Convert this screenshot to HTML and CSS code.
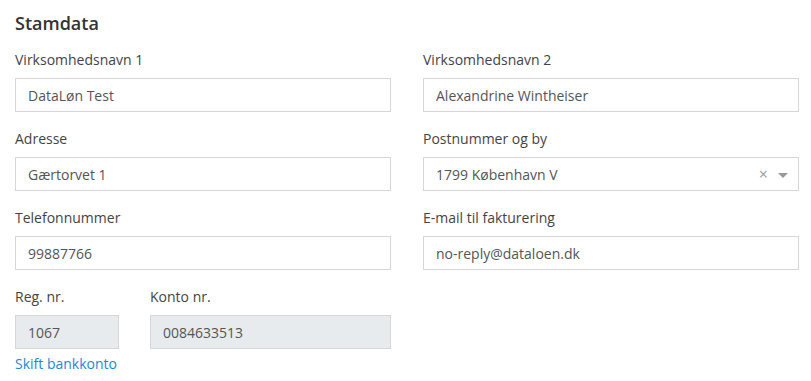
FILE: index.html
```html
<!DOCTYPE html>
<html lang="da">
<head>
    <meta charset="UTF-8">
    <meta name="viewport" content="width=device-width, initial-scale=1.0">
    <title>Stamdata</title>
    <link rel="stylesheet" href="styles.css">
</head>
<body>
    <div class="container">
        <h2>Stamdata</h2>
        <form class="form-grid">
            <div class="field">
                <label for="name1">Virksomhedsnavn 1</label>
                <input type="text" id="name1" value="DataLøn Test">
            </div>
            <div class="field">
                <label for="name2">Virksomhedsnavn 2</label>
                <input type="text" id="name2" value="Alexandrine Wintheiser">
            </div>
            <div class="field">
                <label for="address">Adresse</label>
                <input type="text" id="address" value="Gærtorvet 1">
            </div>
            <div class="field">
                <label>Postnummer og by</label>
                <div class="select-box">
                    <span class="select-value">1799 København V</span>
                    <span class="select-clear">&times;</span>
                    <span class="select-arrow"></span>
                </div>
            </div>
            <div class="field">
                <label for="phone">Telefonnummer</label>
                <input type="text" id="phone" value="99887766">
            </div>
            <div class="field">
                <label for="email">E-mail til fakturering</label>
                <input type="text" id="email" value="no-reply@dataloen.dk">
            </div>
            <div class="field bank">
                <div class="bank-row">
                    <div class="reg">
                        <label for="reg">Reg. nr.</label>
                        <input type="text" id="reg" value="1067" disabled>
                    </div>
                    <div class="konto">
                        <label for="konto">Konto nr.</label>
                        <input type="text" id="konto" value="0084633513" disabled>
                    </div>
                </div>
                <a href="#" class="link">Skift bankkonto</a>
            </div>
        </form>
    </div>
</body>
</html>
```

FILE: styles.css
```css
body {
    font-family: "Open Sans", Arial, sans-serif;
    font-size: 14px;
    color: #444444;
    background-color: #ffffff;
    margin: 0;
}
.container {
    padding: 11px 12px 0 15px;
}
h2 {
    font-size: 18px;
    font-weight: 600;
    line-height: 24px;
    margin: 0 0 15px 0;
    color: #333333;
}
.form-grid {
    display: grid;
    grid-template-columns: 376px 376px;
    column-gap: 32px;
}
.field {
    display: flex;
    flex-direction: column;
    margin-bottom: 17px;
}
label {
    display: block;
    line-height: 20px;
    margin-bottom: 8px;
}
input, .select-box {
    box-sizing: border-box;
    height: 34px;
    width: 100%;
    padding: 0 12px;
    border: 1px solid #d4d7da;
    border-radius: 0;
    font-family: inherit;
    font-size: 14px;
    color: #555555;
    background-color: #ffffff;
    margin: 0;
}
input:disabled {
    background-color: #e8ebee;
    color: #555555;
}
.select-box {
    display: flex;
    align-items: center;
}
.select-value {
    flex: 1;
}
.select-clear {
    color: #999999;
    font-size: 16px;
    margin-right: 10px;
}
.select-arrow {
    width: 0;
    height: 0;
    border-left: 5px solid transparent;
    border-right: 5px solid transparent;
    border-top: 5px solid #999999;
    margin-right: -2px;
    margin-top: 2px;
}
.bank-row {
    display: flex;
    gap: 31px;
}
.reg {
    width: 104px;
}
.konto {
    flex: 1;
}
.link {
    color: #1e88d0;
    text-decoration: none;
    line-height: 20px;
    margin-top: 5px;
}
```
